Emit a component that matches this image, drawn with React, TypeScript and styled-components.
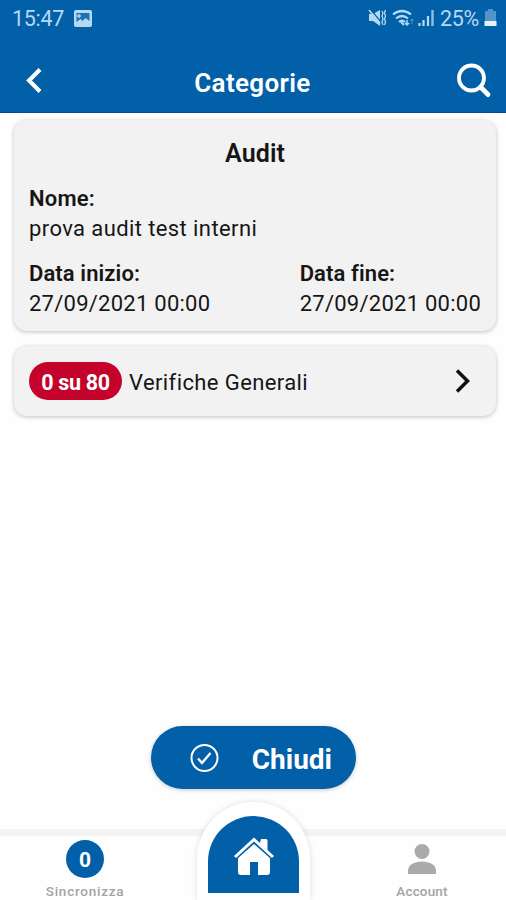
import React from "react";
import styled, { createGlobalStyle } from "styled-components";

const BLUE = "#0260a8";

const GlobalStyle = createGlobalStyle`
  * { box-sizing: border-box; }
  body { margin: 0; background: #fefefe; font-family: Roboto, "Liberation Sans", sans-serif; }
  button { font: inherit; border: 0; padding: 0; background: none; color: inherit; }
  svg { display: block; flex: none; }
`;

const Screen = styled.div`
  width: 506px;
  height: 900px;
  display: flex;
  flex-direction: column;
  overflow: hidden;
  background: #fefefe;
`;

const StatusBar = styled.div`
  height: 36px;
  flex: none;
  padding: 0 9px 0 12px;
  display: flex;
  align-items: center;
  justify-content: space-between;
  background: ${BLUE};
  color: #b5d8f3;
`;

const StatusGroup = styled.div<{ $gap: number }>`
  display: flex;
  align-items: center;
  gap: ${(p) => p.$gap}px;
`;

const Label = styled.span<{ $size: number; $weight?: number; $spacing?: number }>`
  font-size: ${(p) => p.$size}px;
  font-weight: ${(p) => p.$weight ?? 400};
  letter-spacing: ${(p) => p.$spacing ?? 0}px;
  white-space: nowrap;
`;

const Header = styled.header`
  height: 77px;
  flex: none;
  display: grid;
  grid-template-columns: 80px 1fr 80px;
  align-items: center;
  padding: 0 14px 0 22px;
  background: ${BLUE};
  border-bottom: 1px solid #064b96;
  color: #fff;
`;

const HeaderTitle = styled.h1`
  margin: 17px 0 0 -9px;
  text-align: center;
  font-size: 26px;
  line-height: 30px;
  font-weight: 600;
  letter-spacing: 0.35px;
`;

const IconButton = styled.button<{ $end?: boolean }>`
  margin-top: ${(p) => (p.$end ? 14 : 12)}px;
  justify-self: ${(p) => (p.$end ? "end" : "start")};
`;

const Content = styled.main`
  flex: 1;
  min-height: 0;
  display: flex;
  flex-direction: column;
  padding: 7px 10px 0 14px;
`;

const Card = styled.section`
  background: #f2f2f2;
  border-radius: 13px;
  box-shadow: 0 1px 4px rgba(0, 0, 0, 0.25);
  color: #161616;
`;

const AuditCard = styled(Card)`
  height: 211px;
  padding: 19px 15px 0 15px;
`;

const CardTitle = styled.h2`
  margin: 0 0 15px;
  text-align: center;
  font-size: 25px;
  line-height: 30px;
  font-weight: 600;
  letter-spacing: 0.1px;
`;

const FieldRow = styled.div`
  display: flex;
  justify-content: space-between;
  margin-bottom: 15px;
`;

const Field = styled.div`
  display: flex;
  flex-direction: column;
  line-height: 30px;
`;

const CategoryCard = styled(Card)`
  height: 70px;
  margin-top: 15px;
  padding: 0 26px 0 15px;
  display: flex;
  align-items: center;
`;

const CountPill = styled.span`
  width: 93px;
  height: 38px;
  padding-top: 2px;
  margin-right: 7px;
  display: flex;
  align-items: center;
  justify-content: center;
  border-radius: 19px;
  background: #c4032c;
  color: #fff;
`;

const CategoryName = styled(Label)`
  flex: 1;
  padding-top: 2px;
`;

const CloseButton = styled.button`
  width: 205px;
  height: 63px;
  margin: auto 0 40px 137px;
  padding: 0 24px 0 38px;
  display: flex;
  align-items: center;
  justify-content: space-between;
  border-radius: 32px;
  background: ${BLUE};
  box-shadow: 0 1px 4px rgba(0, 0, 0, 0.22);
  color: #fff;
`;

const CloseLabel = styled(Label)`
  padding-top: 3px;
`;

const NavBar = styled.nav`
  height: 71px;
  flex: none;
  display: grid;
  grid-template-columns: 197px 113px 196px;
  grid-template-rows: 64px;
  align-items: end;
  border-top: 7px solid #f4f4f4;
`;

const NavItem = styled.button<{ $before?: number; $after?: number }>`
  height: 64px;
  padding: 0 ${(p) => p.$after ?? 0}px 0 ${(p) => p.$before ?? 0}px;
  display: flex;
  flex-direction: column;
  align-items: center;
  color: #a3a3a3;
`;

const SyncCount = styled.span`
  width: 38px;
  height: 38px;
  margin: 4px 0 5px;
  padding-top: 1px;
  display: flex;
  align-items: center;
  justify-content: center;
  border-radius: 50%;
  background: ${BLUE};
  color: #fff;
`;

const AccountIcon = styled.svg`
  margin: 7px 0 8px;
`;

const HomeTab = styled.div`
  height: 98px;
  padding-top: 14px;
  display: flex;
  justify-content: center;
  border-radius: 57px 57px 0 0;
  background: #fff;
  box-shadow: 0 0 6px rgba(0, 0, 0, 0.13);
`;

const HomeButton = styled.button`
  width: 91px;
  height: 77px;
  padding-top: 20px;
  display: flex;
  justify-content: center;
  border-radius: 46px 46px 0 0;
  background: ${BLUE};
`;

function StatusIcons() {
  return (
    <svg width="67" height="20" viewBox="0 0 67 20" fill="none" stroke="currentColor">
      <path d="M1 6h4l7-4v16l-7-5H1z" fill="currentColor" stroke="none" />
      <path d="M2.500 1.500 13 14" stroke={BLUE} strokeWidth="1.200" />
      <path d="M1 2l11 13.500" strokeWidth="1.600" />
      <path d="m14 3 1 2-1 3 1 3-1 3 1 3M17.500 2l-1 3 1 3-1 3 1 3-1 3" strokeWidth="1.300" />
      <path d="M25 6.500q9-7 18 0M28 10.500q6-5 12 0M31 14q3-3 6 0" strokeWidth="2.200" />
      <path d="M33 14l3 3" strokeWidth="2" />
      <path d="M39 12v5m-2-2 2 2 2-2" strokeWidth="1.500" />
      <path d="M44 16v-5m-1.500 2 1.500-2 1.500 2" strokeWidth="1" opacity=".4" />
      <path d="M51.500 15V18M55.500 12v6M60 8v10" strokeWidth="2.200" />
      <path d="M64.500 2v16" strokeWidth="2.400" opacity=".8" />
    </svg>
  );
}

export default function App() {
  return (
    <>
      <GlobalStyle />
      <Screen>
        <StatusBar>
          <StatusGroup $gap={10}>
            <Label $size={21.500} $spacing={-0.3}>15:47</Label>
            <svg width="18" height="17" viewBox="0 0 18 17">
              <rect width="18" height="17" rx="2" fill="currentColor" />
              <path d="M2.500 12V3h13v8l-4-3-3 3-2-2z" fill={BLUE} opacity=".85" />
              <path d="M5 4v4M3 6h4" stroke="currentColor" strokeWidth="1.400" />
            </svg>
          </StatusGroup>
          <StatusGroup $gap={5}>
            <StatusIcons />
            <Label $size={21.500} $spacing={-0.3}>25%</Label>
            <svg width="13" height="18" viewBox="0 0 13 18" fill="currentColor">
              <path d="M4 0h5v2h3v10H1V2h3z" opacity=".45" />
              <path d="M.5 12h12v5H.5z" fill="#e2f2fe" />
            </svg>
          </StatusGroup>
        </StatusBar>

        <Header>
          <IconButton aria-label="Indietro">
            <svg width="24" height="28" viewBox="0 0 24 28" fill="none" stroke="#fff" strokeWidth="4">
              <path d="M18 3.500 7 14.500l11 11" />
            </svg>
          </IconButton>
          <HeaderTitle>Categorie</HeaderTitle>
          <IconButton $end aria-label="Cerca">
            <svg width="36" height="36" viewBox="0 0 36 36" fill="none" stroke="#fff" strokeWidth="3.800">
              <circle cx="15.500" cy="15" r="12.500" />
              <path d="m24.500 24 7.500 7.500" strokeWidth="4.800" strokeLinecap="round" />
            </svg>
          </IconButton>
        </Header>

        <Content>
          <AuditCard>
            <CardTitle>Audit</CardTitle>
            <FieldRow>
              <Field>
                <Label $size={22} $weight={600} $spacing={0.2}>Nome:</Label>
                <Label $size={22} $spacing={0.4}>prova audit test interni</Label>
              </Field>
            </FieldRow>
            <FieldRow>
              <Field>
                <Label $size={22} $weight={600} $spacing={0.1}>Data inizio:</Label>
                <Label $size={22} $spacing={0.25}>27/09/2021 00:00</Label>
              </Field>
              <Field>
                <Label $size={22} $weight={600} $spacing={0.1}>Data fine:</Label>
                <Label $size={22} $spacing={0.25}>27/09/2021 00:00</Label>
              </Field>
            </FieldRow>
          </AuditCard>

          <CategoryCard>
            <CountPill>
              <Label $size={21.500} $weight={700} $spacing={-0.3}>0 su 80</Label>
            </CountPill>
            <CategoryName $size={22} $spacing={0.4}>Verifiche Generali</CategoryName>
            <svg width="16" height="26" viewBox="0 0 16 26" fill="none" stroke="#111" strokeWidth="3.500">
              <path d="m3 2.500 10.500 10.500L3 23.500" />
            </svg>
          </CategoryCard>

          <CloseButton>
            <svg width="30" height="30" viewBox="0 0 30 30" fill="none" stroke="#fff" strokeWidth="2">
              <circle cx="15.500" cy="15" r="13" />
              <path d="m9 15.500 4 4.500 8.500-10" strokeWidth="2.400" />
            </svg>
            <CloseLabel $size={28} $weight={700}>Chiudi</CloseLabel>
          </CloseButton>
        </Content>

        <NavBar>
          <NavItem $after={27}>
            <SyncCount>
              <Label $size={21} $weight={700}>0</Label>
            </SyncCount>
            <Label $size={13.500} $weight={500} $spacing={0.75}>Sincronizza</Label>
          </NavItem>
          <HomeTab>
            <HomeButton aria-label="Home">
              <svg width="42" height="42" viewBox="0 0 42 42" fill="#fff">
                <path d="M21 8 37 22v14q0 3-3 3h-9V26h-8v13H8q-3 0-3-3V22z" />
                <path d="M28 3h5q1.500 0 1.500 1.500V16l-8-7z" />
                <path d="M2 23.500 21 6l19 17.500" fill="none" stroke={BLUE} strokeWidth="1.500" />
                <path d="M2 21 21 3.500 40 21" fill="none" stroke="#fff" strokeWidth="3" />
              </svg>
            </HomeButton>
          </HomeTab>
          <NavItem $before={28}>
            <AccountIcon width="30" height="32" viewBox="0 0 30 32" fill="#aaa">
              <circle cx="15" cy="8.500" r="7.500" />
              <path d="M1 31v-3c0-6 6-9.500 14-9.500S29 22 29 28v3z" />
            </AccountIcon>
            <Label $size={13.500} $weight={500} $spacing={0.15}>Account</Label>
          </NavItem>
        </NavBar>
      </Screen>
    </>
  );
}
